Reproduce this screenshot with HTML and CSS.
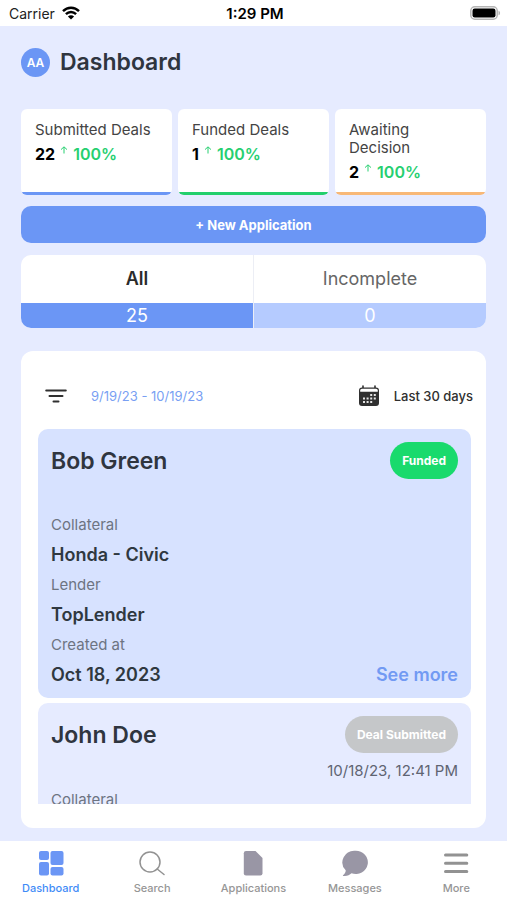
FILE: index.html
```html
<!DOCTYPE html>
<html lang="en">
<head>
<meta charset="utf-8">
<meta name="viewport" content="width=device-width, initial-scale=1">
<title>Dashboard</title>
<link rel="stylesheet" href="styles.css">
</head>
<body>
<div class="app">
  <div class="status">
    <div class="status-left">
      <span>Carrier</span>
      <svg width="18" height="14" viewBox="0 0 18 14" fill="none" stroke="#000" stroke-width="2.4" aria-hidden="true">
        <path d="M1 5.2C5.5 .6 12.500 .6 17 5.2"/>
        <path d="M3.900 8.200C6.800 5.300 11.200 5.300 14.100 8.200"/>
        <path d="M9 13.600 5.900 10.500C7.600 8.800 10.400 8.800 12.100 10.500Z" fill="#000" stroke="none"/>
      </svg>
    </div>
    <span class="status-time">1:29 PM</span>
    <div class="status-right">
      <svg width="31" height="14" viewBox="0 0 31 14" aria-hidden="true">
        <rect x=".8" y=".8" width="26.400" height="12.400" rx="4" fill="#fff" stroke="#b5b5b5" stroke-width="1.500"/>
        <rect x="2.500" y="2.500" width="23" height="9" rx="2.200" fill="#000"/>
        <path d="M28.500 4.700C30.600 5.300 30.600 8.700 28.500 9.300Z" fill="#b5b5b5"/>
      </svg>
    </div>
  </div>

  <main class="main">
    <header class="header">
      <span class="avatar">AA</span>
      <h1 class="title">Dashboard</h1>
    </header>

    <section class="stats">
      <div class="stat stat-blue">
        <h2 class="stat-label">Submitted Deals</h2>
        <p class="stat-value">22 <svg class="arrow" width="8" height="8" viewBox="0 0 8 8" aria-hidden="true"><path d="M4 7.500V1M1 3.600 4 .8 7 3.600"/></svg> <span class="up">100%</span></p>
      </div>
      <div class="stat stat-green">
        <h2 class="stat-label">Funded Deals</h2>
        <p class="stat-value">1 <svg class="arrow" width="8" height="8" viewBox="0 0 8 8" aria-hidden="true"><path d="M4 7.500V1M1 3.600 4 .8 7 3.600"/></svg> <span class="up">100%</span></p>
      </div>
      <div class="stat stat-orange">
        <h2 class="stat-label">Awaiting Decision</h2>
        <p class="stat-value">2 <svg class="arrow" width="8" height="8" viewBox="0 0 8 8" aria-hidden="true"><path d="M4 7.500V1M1 3.600 4 .8 7 3.600"/></svg> <span class="up">100%</span></p>
      </div>
    </section>

    <button class="new-app" type="button">+ New Application</button>

    <div class="tabs">
      <button class="tab tab-active" type="button"><span class="tab-name">All</span><span class="tab-count">25</span></button>
      <button class="tab" type="button"><span class="tab-name">Incomplete</span><span class="tab-count">0</span></button>
    </div>

    <section class="panel">
      <div class="filters">
        <button class="icon-button" type="button" aria-label="Filter">
          <svg width="22" height="14" viewBox="0 0 22 14" stroke="#303030" stroke-width="2" stroke-linecap="round" aria-hidden="true">
            <path d="M1.200 1.500H20.800M4.500 7H17.500M8.500 12.500H13.500"/>
          </svg>
        </button>
        <span class="range">9/19/23 - 10/19/23</span>
        <button class="period" type="button">
          <svg width="22" height="22" viewBox="0 0 22 22" aria-hidden="true">
            <rect x="1" y="2.500" width="20" height="18.500" rx="3" fill="#303030"/>
            <path d="M5 1V3M17 1V3" stroke="#303030" stroke-width="1.600" stroke-linecap="round"/>
            <path d="M2.200 6.700V5.500C2.200 4.500 3 3.800 4 3.800H18C19 3.800 19.800 4.500 19.800 5.500V6.700Z" fill="#fff"/>
            <g fill="#e4e4e4">
              <path d="M12.200 9h2v2h-2zM15.800 9h2v2h-2z"/>
              <path d="M5 12.500h2v2H5zM8.600 12.500h2v2h-2zM12.200 12.500h2v2h-2zM15.800 12.500h2v2h-2z"/>
              <path d="M5 16h2v2H5zM8.600 16h2v2h-2zM12.200 16h2v2h-2z"/>
            </g>
          </svg>
          Last 30 days
        </button>
      </div>

      <div class="deals">
        <article class="deal deal-selected">
          <div class="deal-top">
            <h2 class="deal-name">Bob Green</h2>
            <div class="deal-state"><span class="badge badge-green">Funded</span></div>
          </div>
          <dl class="facts">
            <dt>Collateral</dt><dd>Honda - Civic</dd>
            <dt>Lender</dt><dd>TopLender</dd>
            <dt>Created at</dt><dd class="last">Oct 18, 2023 <a class="more" href="#">See more</a></dd>
          </dl>
        </article>
        <article class="deal">
          <div class="deal-top">
            <h2 class="deal-name">John Doe</h2>
            <div class="deal-state"><span class="badge">Deal Submitted</span><span class="deal-time">10/18/23, 12:41 PM</span></div>
          </div>
          <dl class="facts">
            <dt>Collateral</dt>
          </dl>
        </article>
      </div>
    </section>
  </main>

  <nav class="nav">
    <a class="nav-item nav-active" href="#">
      <svg width="26" height="26" viewBox="0 0 26 26" fill="#6b96f5" aria-hidden="true">
        <rect x="1" y="1" width="10" height="9" rx="2"/><rect x="1" y="12" width="10" height="13.500" rx="2"/>
        <rect x="12.500" y="1" width="13" height="14" rx="2"/><rect x="12.500" y="17" width="13" height="8.500" rx="2"/>
      </svg>
      Dashboard
    </a>
    <a class="nav-item" href="#">
      <svg width="26" height="26" viewBox="0 0 26 26" fill="none" stroke="#929292" stroke-width="1.500" stroke-linecap="round" aria-hidden="true">
        <circle cx="11" cy="12" r="10"/><path d="M18.200 19 25 24.500"/>
      </svg>
      Search
    </a>
    <a class="nav-item" href="#">
      <svg width="26" height="26" viewBox="0 0 26 26" fill="#9996a5" aria-hidden="true">
        <path d="M6 1H15.500L22.500 8V23.300Q22.500 25.500 20.300 25.500H6Q3.800 25.500 3.800 23.300V3.200Q3.800 1 6 1Z"/>
      </svg>
      Applications
    </a>
    <a class="nav-item" href="#">
      <svg width="26" height="26" viewBox="0 0 26 26" fill="#9996a5" aria-hidden="true">
        <path d="M13.500 .8A12 11.600 0 1 1 9.500 23.200C7.500 25.200 4.500 26.200 1.200 26 .7 25.800 .8 25.300 1.300 25 3 23.700 3.800 22 3.700 20.300A12 11.600 0 0 1 13.500 .8Z"/>
      </svg>
      Messages
    </a>
    <a class="nav-item" href="#">
      <svg width="26" height="26" viewBox="0 0 26 26" stroke="#929292" stroke-width="3" stroke-linecap="round" aria-hidden="true">
        <path d="M2.500 5H23.800M2.500 13.300H23.800M2.500 21.600H23.800"/>
      </svg>
      More
    </a>
  </nav>
</div>
</body>
</html>
```
FILE: styles.css
```css
* { box-sizing: border-box; }
body { margin: 0; font-family: Inter, "Liberation Sans", sans-serif; color: #2f353f; background: #e6ebff; }
h1, h2, p, dl, dd { margin: 0; }
button { border: 0; padding: 0; background: none; font: inherit; color: inherit; cursor: pointer; }
a { color: inherit; text-decoration: none; }
svg { display: block; flex: none; }

.app { display: flex; flex-direction: column; height: 100vh; }

.status { display: grid; grid-template-columns: 1fr auto 1fr; align-items: center; height: 26px; padding: 0 6px 0 9px; background: #fff; color: #222; font-size: 14px; }
.status-left { display: flex; align-items: center; gap: 7px; }
.status-time { font-size: 15px; font-weight: 600; color: #000; }
.status-right { display: flex; justify-content: flex-end; }

.main { flex: 1; min-height: 0; display: flex; flex-direction: column; padding: 20px 21px 13px; }
.header { display: flex; align-items: center; gap: 10px; height: 32px; }
.avatar { display: flex; align-items: center; justify-content: center; width: 29px; height: 29px; border-radius: 50%; background: #6b96f5; color: #fff; font-size: 12px; font-weight: 600; }
.title { font-size: 23px; font-weight: 600; line-height: 32px; }

.stats { display: grid; grid-template-columns: repeat(3, 1fr); gap: 6px; margin-top: 31px; }
.stat { --accent: #6b96f5; min-height: 86px; padding: 12px 14px 11px; border-radius: 6px; background: linear-gradient(var(--accent), var(--accent)) bottom / 100% 3px no-repeat #fff; }
.stat-green { --accent: #23cf6c; }
.stat-orange { --accent: #f8b877; }
.stat-label { font-size: 15px; font-weight: 400; line-height: 18px; color: #444; }
.stat-value { display: flex; gap: 5px; margin-top: 4px; font-size: 16px; font-weight: 700; line-height: 22px; color: #000; }
.up { color: #26cf70; font-weight: 600; }
.arrow { margin-top: 3px; fill: none; stroke: #26cf70; stroke-width: 1; }

.new-app { flex: none; height: 37px; margin-top: 11px; border-radius: 10px; background: #6b96f5; color: #fff; font-size: 13px; font-weight: 700; }

.tabs { flex: none; display: grid; grid-template-columns: 1fr 1fr; gap: 1px; margin-top: 12px; border-radius: 10px; overflow: hidden; background: #eceef5; }
.tab { display: flex; flex-direction: column; font-size: 18px; color: #666; background: #fff; }
.tab-name { width: 100%; line-height: 48px; }
.tab-count { width: 100%; line-height: 25px; background: #b5cbff; color: #fff; }
.tab-active .tab-name { font-weight: 600; color: #2b2b2b; }
.tab-active .tab-count { background: #6b96f5; }

.panel { flex: 1; min-height: 0; display: flex; flex-direction: column; margin-top: 23px; padding: 30px 15px 24px 17px; border-radius: 12px; background: #fff; }
.filters { display: flex; align-items: center; height: 30px; margin-right: -2px; padding-left: 7px; font-size: 13px; }
.icon-button { flex: none; }
.range { margin-left: 24px; color: #799ff3; }
.period { display: flex; align-items: center; gap: 14px; margin-left: auto; color: #303030; font-weight: 500; }

.deals { flex: 1; min-height: 0; display: flex; flex-direction: column; gap: 5px; margin-top: 18px; overflow-y: auto; scrollbar-width: none; }
.deal { flex: none; padding: 13px 13px 8px; border-radius: 10px; background: #e6ebff; }
.deal-selected { background: #d7e2ff; }
.deal-top { display: flex; justify-content: space-between; min-height: 68px; }
.deal-name { font-size: 23px; font-weight: 600; line-height: 38px; }
.deal-state { display: flex; flex-direction: column; align-items: flex-end; }
.badge { padding: 0 12px; border-radius: 19px; background: #c5c7c9; color: #fff; font-size: 12px; font-weight: 700; line-height: 37px; }
.badge-green { background: #19da6d; }
.deal-time { margin-top: 4px; font-size: 15px; line-height: 28px; color: #5f6472; }
.facts { line-height: 30px; }
.facts dt { font-size: 15px; color: #6d7482; }
.facts dd { font-size: 18px; font-weight: 600; color: #2f3840; }
.facts .last { display: flex; justify-content: space-between; }
.more { color: #729af3; }

.nav { flex: none; display: grid; grid-template-columns: repeat(5, 1fr); height: 59px; background: #fff; }
.nav-item { display: flex; flex-direction: column; align-items: center; gap: 4px; padding-top: 9px; font-size: 11px; font-weight: 500; line-height: 16px; color: #969696; }
.nav-active { color: #3f8cf7; }
```
